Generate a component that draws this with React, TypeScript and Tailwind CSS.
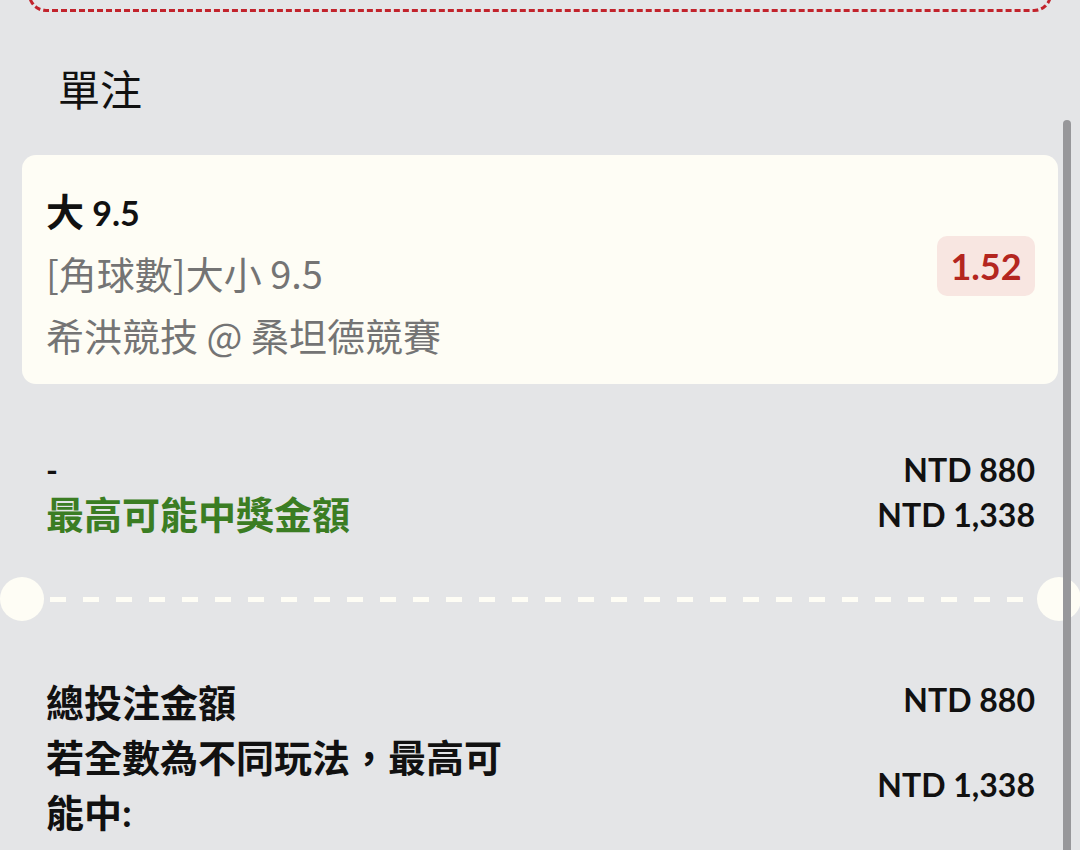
import type { ReactNode } from "react";

// CJK glyphs sit larger than the Latin text in this layout
function Z({ children }: { children: ReactNode }) {
  return <span className="text-[38px]">{children}</span>;
}

function Divider() {
  return (
    <div className="mt-[40px] flex h-[44px] items-center">
      <div className="h-[44px] w-[44px] shrink-0 rounded-full bg-[#fefdf5]" />
      <div className="mx-[6px] h-[5px] flex-1 bg-[repeating-linear-gradient(90deg,#fefdf5_0_16px,transparent_16px_33px)]" />
      <div className="-mr-[1px] h-[44px] w-[44px] shrink-0 rounded-full bg-[#fefdf5]" />
    </div>
  );
}

export default function App() {
  return (
    <div className="relative h-[850px] w-[1080px] overflow-hidden bg-[#e4e5e7] font-['Lato','Noto_Sans_CJK_TC',sans-serif] text-[32px] text-[#111]">
      {/* bottom edge of the previous (selected) block */}
      <div className="mx-[28px] -mt-[40px] h-[52px] rounded-[18px] border-[3px] border-dashed border-[#c2232c]" />

      <h2 className="mt-[48px] pl-[58px] text-[42px] leading-[60px] font-normal">單注</h2>

      {/* selection card */}
      <div className="mx-[22px] mt-[35px] flex items-center justify-between rounded-[14px] bg-[#fefdf5] pt-[25px] pr-[23px] pb-[18px] pl-[24px]">
        <div>
          <div className="h-[62px] text-[34px] leading-[62px] font-bold">
            <Z>大</Z> 9.5
          </div>
          <div className="h-[62px] font-['Noto_Sans_CJK_TC',sans-serif] text-[38px] leading-[62px] text-[#747474]">
            [角球數]大小 9.5
          </div>
          <div className="h-[62px] font-['Noto_Sans_CJK_TC',sans-serif] text-[38px] leading-[62px] text-[#747474]">
            希洪競技 @ 桑坦德競賽
          </div>
        </div>
        <div className="mb-[14px] flex h-[60px] w-[98px] items-center justify-center rounded-[10px] bg-[#f8e6e1] text-[36px] font-bold text-[#b4261f]">
          1.52
        </div>
      </div>

      {/* stake / potential win */}
      <div className="mt-[63px] pr-[45px] pl-[46px] font-bold">
        <div className="flex h-[45px] items-center justify-between leading-[45px]">
          <span>-</span>
          <span>NTD 880</span>
        </div>
        <div className="flex h-[45px] items-center justify-between leading-[45px]">
          <span className="text-[38px] text-[#3b7d23]">最高可能中獎金額</span>
          <span>NTD 1,338</span>
        </div>
      </div>

      <Divider />

      {/* totals */}
      <div className="mt-[54px] pr-[45px] pl-[46px] font-bold">
        <div className="flex h-[55px] items-center justify-between leading-[55px]">
          <span className="text-[38px]">總投注金額</span>
          <span className="pb-[6px]">NTD 880</span>
        </div>
        <div className="flex items-center justify-between">
          <div className="w-[480px] text-[38px] leading-[55px]">若全數為不同玩法，最高可能中:</div>
          <span>NTD 1,338</span>
        </div>
      </div>

      {/* scrollbar thumb */}
      <div className="absolute top-[120px] left-[1063px] h-[760px] w-[8px] rounded-full bg-[#97979a]" />
    </div>
  );
}
